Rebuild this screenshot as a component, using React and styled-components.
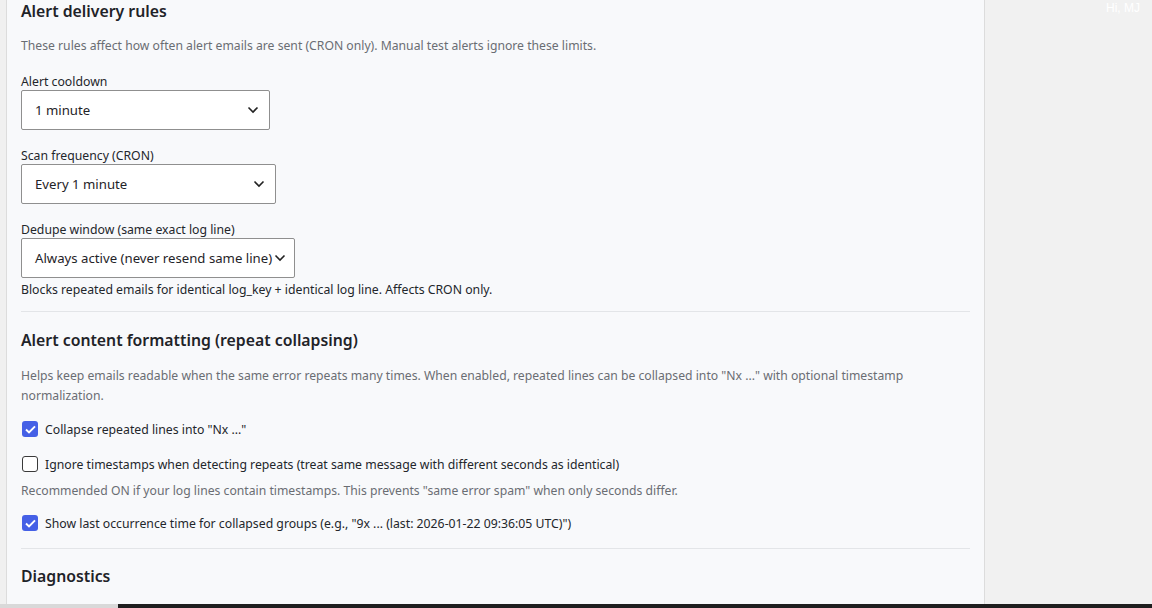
import React from "react"
import styled, { createGlobalStyle } from "styled-components"

const GlobalStyle = createGlobalStyle`
  html, body {
    margin: 0;
    padding: 0;
    height: 100%;
    overflow: hidden;
  }
  body {
    font-family: "Noto Sans", "Open Sans", sans-serif;
    color: #1f2328;
  }
`

const PageStyles = styled.div`
  width: 1152px;
  height: 608px;
  display: flex;
  flex-direction: column;
  overflow: hidden;
`

const BodyRow = styled.div`
  flex: 1;
  display: flex;
  min-height: 0;
`

const LeftRail = styled.div`
  width: 6px;
  background: #f0f0f0;
  border-right: 1px solid #dcdcdc;
`

const MainPanel = styled.main`
  width: 949px;
  padding: 0 14px;
  background: #f8f9fb;
  border-right: 1px solid #dcdcdc;
  overflow: hidden;
`

const SidePane = styled.aside`
  flex: 1;
  background: #f1f1f1;
  display: flex;
  justify-content: flex-end;
  align-items: flex-start;
  padding: 1px 12px 0 0;
`

const Greeting = styled.span`
  font-family: "Liberation Sans", Arial, sans-serif;
  font-size: 12px;
  color: #ffffff;
`

const Footer = styled.div`
  height: 4px;
  display: flex;
`

const FooterLight = styled.div`
  width: 118px;
  background: #d9d9d9;
`

const FooterDark = styled.div`
  flex: 1;
  background: #1e1e1e;
`

const Section = styled.section`
  padding: ${(p) => p.$top}px 0 ${(p) => p.$bottom}px;
  border-bottom: ${(p) => (p.$last ? "none" : "1px solid #e3e5e8")};
`

const Title = styled.h2`
  margin: 0 0 ${(p) => p.$gap}px;
  font-size: 15.8px;
  font-weight: 600;
  line-height: 22px;
  color: #1f2328;
`

const Desc = styled.p`
  margin: 0 0 ${(p) => p.$gap}px;
  font-size: 12.2px;
  line-height: 20px;
  color: #6a6d73;
  max-width: 910px;
`

const Field = styled.div`
  display: flex;
  flex-direction: column;
  align-items: flex-start;
  margin-bottom: ${(p) => p.$gap}px;
`

const Label = styled.label`
  font-size: 12.25px;
  line-height: 17px;
  color: #23262b;
`

const SelectBox = styled.div`
  box-sizing: border-box;
  width: ${(p) => p.$width}px;
  height: 40px;
  display: flex;
  align-items: center;
  justify-content: space-between;
  padding: 0 ${(p) => (p.$tight ? 8 : 10)}px 0 13px;
  background: #ffffff;
  border: 1px solid #8f8f8f;
  border-radius: 2px;
  font-size: 13.2px;
  color: #1f2328;
  white-space: nowrap;
`

const Help = styled.div`
  font-size: 12.25px;
  line-height: 18px;
  color: #23262b;
  margin-top: 3px;
`

const CheckRow = styled.label`
  display: flex;
  align-items: center;
  gap: 7px;
  height: 20px;
  margin-bottom: ${(p) => p.$gap}px;
  font-size: 12.25px;
  color: #23262b;
`

const CheckBox = styled.span`
  box-sizing: border-box;
  width: 16px;
  height: 16px;
  margin-left: 1px;
  border-radius: 3px;
  display: flex;
  align-items: center;
  justify-content: center;
  background: ${(p) => (p.$on ? "#4560e6" : "#ffffff")};
  border: ${(p) => (p.$on ? "none" : "1.5px solid #3a3a3a")};
`

const Note = styled.div`
  font-size: 12.2px;
  line-height: 18px;
  color: #6a6d73;
  margin: -7px 0 ${(p) => p.$gap}px;
`

function Chevron() {
  return (
    <svg width="12" height="8" viewBox="0 0 12 8">
      <path d="M1.5 1.5 L6 6 L10.5 1.5" fill="none" stroke="#222" strokeWidth="1.6" />
    </svg>
  )
}

function Select({ value, width, tight }) {
  return (
    <SelectBox $width={width} $tight={tight}>
      <span>{value}</span>
      <Chevron />
    </SelectBox>
  )
}

function Check({ on, children, gap }) {
  return (
    <CheckRow $gap={gap}>
      <CheckBox $on={on}>
        {on && (
          <svg width="11" height="9" viewBox="0 0 11 9">
            <path d="M1 4.6 L4 7.4 L10 1.4" fill="none" stroke="#fff" strokeWidth="2" />
          </svg>
        )}
      </CheckBox>
      <span>{children}</span>
    </CheckRow>
  )
}

export default function App() {
  return (
    <PageStyles>
      <GlobalStyle />
      <BodyRow>
        <LeftRail />
        <MainPanel>
          <Section $top={0} $bottom={12}>
            <Title $gap={14}>Alert delivery rules</Title>
            <Desc $gap={17}>
              These rules affect how often alert emails are sent (CRON only). Manual test alerts ignore these limits.
            </Desc>
            <Field $gap={17}>
              <Label>Alert cooldown</Label>
              <Select value="1 minute" width={249} />
            </Field>
            <Field $gap={17}>
              <Label>Scan frequency (CRON)</Label>
              <Select value="Every 1 minute" width={255} />
            </Field>
            <Field $gap={0}>
              <Label>Dedupe window (same exact log line)</Label>
              <Select value="Always active (never resend same line)" width={274} tight />
              <Help>Blocks repeated emails for identical log_key + identical log line. Affects CRON only.</Help>
            </Field>
          </Section>
          <Section $top={17} $bottom={15}>
            <Title $gap={15}>Alert content formatting (repeat collapsing)</Title>
            <Desc $gap={13}>
              Helps keep emails readable when the same error repeats many times. When enabled, repeated lines can be collapsed into "Nx ..." with optional timestamp normalization.
            </Desc>
            <Check on gap={15}>Collapse repeated lines into "Nx ..."</Check>
            <Check gap={15}>Ignore timestamps when detecting repeats (treat same message with different seconds as identical)</Check>
            <Note $gap={13}>
              Recommended ON if your log lines contain timestamps. This prevents "same error spam" when only seconds differ.
            </Note>
            <Check on gap={0}>Show last occurrence time for collapsed groups (e.g., "9x ... (last: 2026-01-22 09:36:05 UTC)")</Check>
          </Section>
          <Section $top={16} $bottom={0} $last>
            <Title $gap={0}>Diagnostics</Title>
          </Section>
        </MainPanel>
        <SidePane>
          <Greeting>Hi, MJ</Greeting>
        </SidePane>
      </BodyRow>
      <Footer>
        <FooterLight />
        <FooterDark />
      </Footer>
    </PageStyles>
  )
}
